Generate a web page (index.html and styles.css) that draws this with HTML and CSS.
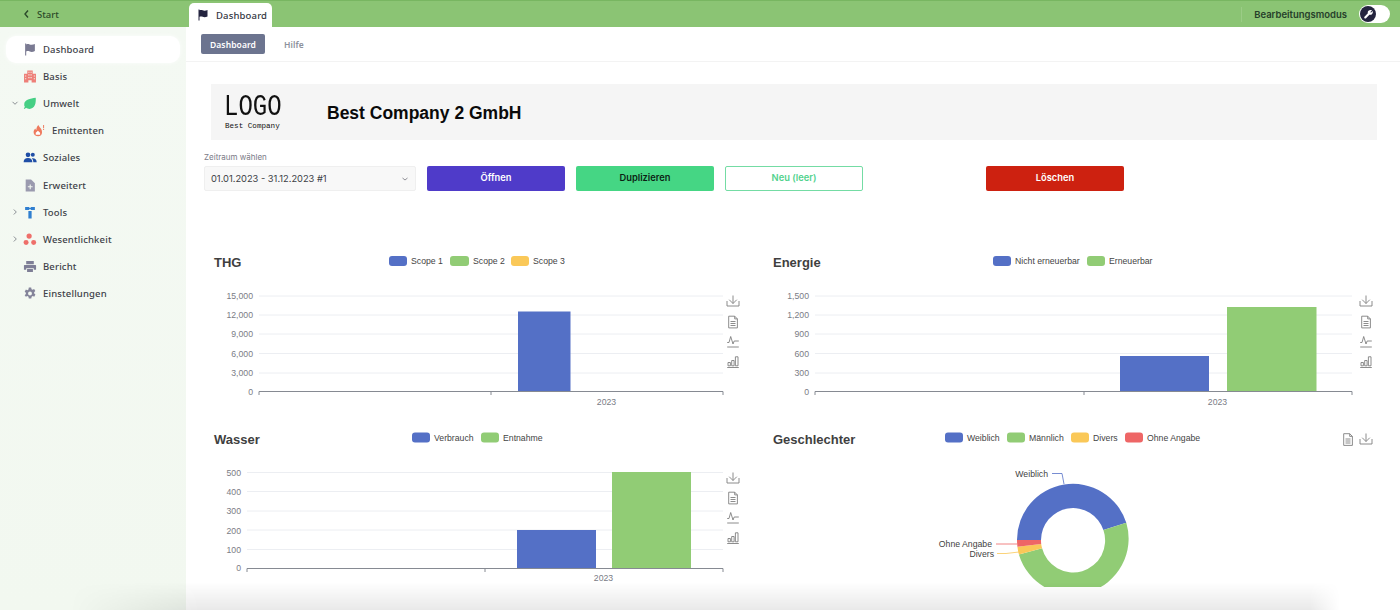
FILE: index.html
```html
<!DOCTYPE html>
<html lang="de">
<head>
<meta charset="utf-8">
<title>Dashboard</title>
<link rel="stylesheet" href="styles.css">
</head>
<body>
<svg class="defs" width="0" height="0" aria-hidden="true">
  <defs>
    <g id="t-save" class="tool"><path d="M-6 -1v5h12v-5M0 -6.500v8M-3.800 -2.300 0 1.500l3.800-3.800"/></g>
    <g id="t-doc" class="tool"><path d="M-4.300 -5.800h6l2.700 2.700v9h-8.700zM1.700 -5.800v2.700h2.700M-2.500 -0.500h5M-2.500 1.500h5M-2.500 3.500h5"/></g>
    <g id="t-line" class="tool"><path d="M-5.800 0.500h1.800l1.700-6 2.300 7.500 1.200-3h4.600M-5.800 5h11.600"/></g>
    <g id="t-bar" class="tool"><path d="M-5.800 5.500h11.600M-5 3.800v-3.300h2.400v3.300zM-1.300 3.800v-5.300h2.400v5.300zM2.400 3.800v-9h2.600v9z"/></g>
  </defs>
</svg>
<header class="topbar">
  <a class="topbar__back"><svg class="topbar__chev" viewBox="0 0 8 10"><path d="M5.500 1.500 2.500 5l3 3.500"/></svg>Start</a>
  <div class="tab">
    <svg class="tab__icon" viewBox="0 0 12 12"><path d="M1.500 0.500h1v11h-1zM2.500 1.300c2-.9 3.500.5 5 .4 1 0 2-.3 3-.7v6.400c-1 .5-2 .8-3 .8-1.600 0-3-1.300-5-.4z"/></svg>
    Dashboard
  </div>
  <div class="topbar__right">
    <span class="topbar__divider"></span>
    <span class="topbar__mode">Bearbeitungsmodus</span>
    <span class="toggle"><span class="toggle__knob"><svg viewBox="0 0 12 12"><path d="M9.800 1.500 8 3.300 8.700 4.100l1.800-1.800c.5 1.300.2 2.600-.8 3.400-.8.700-1.800.8-2.700.5L3.300 10c-.5.500-1.200.5-1.700 0s-.4-1.100 0-1.600L5.300 4.700c-.3-1-.1-2 .7-2.700.9-.9 2.500-1.100 3.800-.5z"/></svg></span></span>
  </div>
</header>
<div class="shell">
  <nav class="sidebar">
    <a class="nav-item nav-item--active">
      <svg class="nav-item__icon" viewBox="0 0 12 12"><path fill="#7a7a92" d="M1.500 0.500h1v11h-1zM2.500 1.300c2-.9 3.500.5 5 .4 1 0 2-.3 3-.7v6.400c-1 .5-2 .8-3 .8-1.600 0-3-1.300-5-.4z"/></svg>
      <span>Dashboard</span>
    </a>
    <a class="nav-item">
      <svg class="nav-item__icon" viewBox="0 0 12 12"><path fill="#ee7f78" d="M3.500 0.500h5v3h3v8h-4v-2h-3v2h-4v-8h3zM4.500 1.500v1h1v-1zM6.500 1.500v1h1v-1zM4.500 4v1h1V4zM6.500 4v1h1V4zM1.500 5v1h1V5zM9.500 5v1h1V5zM4.500 6.500v1h1v-1zM6.500 6.500v1h1v-1zM1.500 7.500v1h1v-1zM9.500 7.500v1h1v-1z"/></svg>
      <span>Basis</span>
    </a>
    <a class="nav-item">
      <svg class="nav-item__chev" viewBox="0 0 8 8"><path d="M1.500 2.800 4 5.300l2.500-2.500"/></svg>
      <svg class="nav-item__icon" viewBox="0 0 12 12"><path fill="#45cf84" d="M11.300.8c.4 5-.8 10.200-5.800 10.200-1.300 0-2.300-.4-3.100-1L1 11 .3 10.300l1-1C.7 8.400.5 7.300.7 6.200 1.300 2.500 6 1.700 11.300.8z"/></svg>
      <span>Umwelt</span>
    </a>
    <a class="nav-item nav-item--child">
      <svg class="nav-item__icon" viewBox="0 0 12 12"><path fill="#ee7a5e" d="M5.500 1C6 3 8.800 4.200 8.800 7.500c0 2.300-1.500 3.800-3.600 3.800S1 9.800 1 7.500c0-1.500.8-2.600 1.600-3.400.2.700.5 1.200 1 1.500C3.500 3.800 4.200 2.100 5.500 1z"/><path fill="#fff" d="M5 6.200 7 8v2H3V8z"/><path fill="#ee7a5e" d="M9.800 1h.9v3h-.9zM9.800 4.600h.9v1h-.9z"/></svg>
      <span>Emittenten</span>
    </a>
    <a class="nav-item">
      <svg class="nav-item__icon" viewBox="0 0 14 12"><path fill="#1f4ea6" d="M5 1a2.300 2.300 0 1 1 0 4.700A2.300 2.300 0 0 1 5 1zM9.800 1.300a2 2 0 1 1 0 4 2 2 0 0 1 0-4zM.6 10.800c0-2.800 1.700-4.300 4.400-4.300s4.400 1.500 4.400 4.300zM10.300 10.800c0-1.600-.5-3-1.600-4 2.800-.5 5 .9 5 4z"/></svg>
      <span>Soziales</span>
    </a>
    <a class="nav-item">
      <svg class="nav-item__icon" viewBox="0 0 12 12"><path fill="#9a9aae" d="M2 0.500h5l3.500 3.500v7.500H2z"/><path fill="#f3f8f1" d="M5.700 5h1v1.700h1.700v1H6.700v1.700h-1V7.700H4v-1h1.700z"/></svg>
      <span>Erweitert</span>
    </a>
    <a class="nav-item">
      <svg class="nav-item__chev" viewBox="0 0 8 8"><path d="M2.800 1.500 5.300 4 2.800 6.500"/></svg>
      <svg class="nav-item__icon" viewBox="0 0 12 12"><path fill="#2f7fd0" d="M1.500 1h3.700v2.700H1.500zM6.800 1h3.700v2.700H6.800zM5 1.600h2v1.500H5zM4.500 4.600h3v7h-3z"/></svg>
      <span>Tools</span>
    </a>
    <a class="nav-item">
      <svg class="nav-item__chev" viewBox="0 0 8 8"><path d="M2.800 1.500 5.300 4 2.800 6.500"/></svg>
      <svg class="nav-item__icon" viewBox="0 0 12 12"><g fill="#ee6f6a"><circle cx="5.200" cy="2.800" r="2.400"/><circle cx="2.400" cy="8.800" r="2.300"/><circle cx="9.400" cy="8.800" r="2.300"/></g></svg>
      <span>Wesentlichkeit</span>
    </a>
    <a class="nav-item">
      <svg class="nav-item__icon" viewBox="0 0 12 12"><path fill="#7e7e96" d="M2.500 1h7v3h-7zM1 4.500h10a.6.6 0 0 1 .6.600V9H9.500V7.500h-7V9H.4V5.100A.6.600 0 0 1 1 4.500zM3.300 8.300h5.400V11H3.300z"/></svg>
      <span>Bericht</span>
    </a>
    <a class="nav-item">
      <svg class="nav-item__icon" viewBox="0 0 12 12"><path fill="#84849a" fill-rule="evenodd" d="M4.900.5h2.200l.3 1.500 1 .5 1.400-.6 1.100 1.900-1.100 1 .1 1.200 1.100 1-1.100 1.900-1.400-.6-1 .6-.3 1.600H4.900l-.3-1.600-1-.6-1.400.6L1.100 7.500l1.100-1V5.300l-1.100-1 1.100-1.900 1.400.6 1-.6zM6 4.200a1.800 1.800 0 1 0 0 3.600 1.800 1.800 0 0 0 0-3.600z"/></svg>
      <span>Einstellungen</span>
    </a>
  </nav>
  <main class="main">
    <div class="subnav">
      <a class="subnav__item subnav__item--active">Dashboard</a>
      <a class="subnav__item">Hilfe</a>
    </div>
    <div class="content">
      <section class="company">
        <div class="logo">
          <span class="logo__mark">LOGO</span>
          <span class="logo__sub">Best Company</span>
        </div>
        <h1 class="company__name">Best Company 2 GmbH</h1>
      </section>
      <section class="period">
        <div class="field">
          <label class="field__label">Zeitraum wählen</label>
          <div class="field__select">
            <span>01.01.2023 - 31.12.2023 #1</span>
            <svg class="field__chev" viewBox="0 0 8 8"><path d="M1.500 3 4 5l2.500-2"/></svg>
          </div>
        </div>
        <button class="btn btn--open">Öffnen</button>
        <button class="btn btn--dup">Duplizieren</button>
        <button class="btn btn--new">Neu (leer)</button>
        <button class="btn btn--del">Löschen</button>
      </section>
      <section class="charts">
        <svg class="chart chart--top" viewBox="204 245 558 177">
          <text class="c-title" x="214" y="267">THG</text>
          <rect class="s-blue" x="389" y="256" width="18" height="10" rx="3"/><text class="c-leg" x="411" y="264">Scope 1</text>
          <rect class="s-green" x="450" y="256" width="19" height="10" rx="3"/><text class="c-leg" x="473" y="264">Scope 2</text>
          <rect class="s-yellow" x="511" y="256" width="18" height="10" rx="3"/><text class="c-leg" x="533" y="264">Scope 3</text>
          <path class="c-grid" d="M259 296H723M259 315H723M259 334H723M259 353.500H723M259 373H723"/>
          <text class="c-tick c-tick--y" x="253" y="299">15,000</text>
          <text class="c-tick c-tick--y" x="253" y="318">12,000</text>
          <text class="c-tick c-tick--y" x="253" y="337">9,000</text>
          <text class="c-tick c-tick--y" x="253" y="357">6,000</text>
          <text class="c-tick c-tick--y" x="253" y="376">3,000</text>
          <text class="c-tick c-tick--y" x="253" y="395">0</text>
          <rect class="s-blue" x="518" y="311.500" width="52.500" height="80"/>
          <path class="c-axis" d="M259 395V391.500H723V395M491 391.500V395"/>
          <text class="c-tick c-tick--x" x="606.500" y="405">2023</text>
          <use href="#t-save" x="733" y="302"/><use href="#t-doc" x="733" y="322"/><use href="#t-line" x="733" y="342"/><use href="#t-bar" x="733" y="362"/>
        </svg>
        <svg class="chart chart--top" viewBox="762 245 624 177">
          <text class="c-title" x="773" y="267">Energie</text>
          <rect class="s-blue" x="993" y="256" width="18" height="10" rx="3"/><text class="c-leg" x="1015" y="264">Nicht erneuerbar</text>
          <rect class="s-green" x="1087" y="256" width="18" height="10" rx="3"/><text class="c-leg" x="1109" y="264">Erneuerbar</text>
          <path class="c-grid" d="M815 296H1352M815 315H1352M815 334H1352M815 353.500H1352M815 373H1352"/>
          <text class="c-tick c-tick--y" x="809" y="299">1,500</text>
          <text class="c-tick c-tick--y" x="809" y="318">1,200</text>
          <text class="c-tick c-tick--y" x="809" y="337">900</text>
          <text class="c-tick c-tick--y" x="809" y="357">600</text>
          <text class="c-tick c-tick--y" x="809" y="376">300</text>
          <text class="c-tick c-tick--y" x="809" y="395">0</text>
          <rect class="s-blue" x="1120" y="356" width="89" height="35.500"/>
          <rect class="s-green" x="1227" y="307" width="89.500" height="84.500"/>
          <path class="c-axis" d="M815 395V391.500H1352V395M1084 391.500V395"/>
          <text class="c-tick c-tick--x" x="1217.500" y="405">2023</text>
          <use href="#t-save" x="1366" y="302"/><use href="#t-doc" x="1366" y="322"/><use href="#t-line" x="1366" y="342"/><use href="#t-bar" x="1366" y="362"/>
        </svg>
        <svg class="chart chart--bottom" viewBox="204 422 558 165">
          <text class="c-title" x="214" y="443.500">Wasser</text>
          <rect class="s-blue" x="412" y="432.500" width="18" height="10" rx="3"/><text class="c-leg" x="434" y="440.500">Verbrauch</text>
          <rect class="s-green" x="481" y="432.500" width="18" height="10" rx="3"/><text class="c-leg" x="503" y="440.500">Entnahme</text>
          <path class="c-grid" d="M247 472.500H723M247 491.500H723M247 511H723M247 530H723M247 549.500H723"/>
          <text class="c-tick c-tick--y" x="241" y="476">500</text>
          <text class="c-tick c-tick--y" x="241" y="495">400</text>
          <text class="c-tick c-tick--y" x="241" y="514">300</text>
          <text class="c-tick c-tick--y" x="241" y="534">200</text>
          <text class="c-tick c-tick--y" x="241" y="553">100</text>
          <text class="c-tick c-tick--y" x="241" y="571">0</text>
          <rect class="s-blue" x="517" y="530" width="79" height="38.500"/>
          <rect class="s-green" x="612" y="472" width="79" height="96.500"/>
          <path class="c-axis" d="M247 572V568.500H723V572M485 568.500V572"/>
          <text class="c-tick c-tick--x" x="603.500" y="581">2023</text>
          <use href="#t-save" x="733" y="479"/><use href="#t-doc" x="733" y="498"/><use href="#t-line" x="733" y="518"/><use href="#t-bar" x="733" y="538"/>
        </svg>
        <svg class="chart chart--bottom" viewBox="762 422 624 165">
          <text class="c-title" x="773" y="443.500">Geschlechter</text>
          <rect class="s-blue" x="945" y="432.500" width="18" height="10" rx="3"/><text class="c-leg" x="967" y="440.500">Weiblich</text>
          <rect class="s-green" x="1007" y="432.500" width="18" height="10" rx="3"/><text class="c-leg" x="1029" y="440.500">Männlich</text>
          <rect class="s-yellow" x="1071" y="432.500" width="18" height="10" rx="3"/><text class="c-leg" x="1093" y="440.500">Divers</text>
          <rect class="s-red" x="1125" y="432.500" width="18" height="10" rx="3"/><text class="c-leg" x="1147" y="440.500">Ohne Angabe</text>
          <use href="#t-doc" x="1348" y="439.500"/><use href="#t-save" x="1366" y="440"/>
          <path class="s-blue" d="M1017 540A56 56 0 0 1 1126.300 522.700L1103.400 530.100A32 32 0 0 0 1041 540Z"/>
          <path class="s-green" d="M1126.300 522.700A56 56 0 1 1 1018.900 554.500L1042.100 548.300A32 32 0 1 0 1103.400 530.100Z"/>
          <path class="s-yellow" d="M1018.900 554.500A56 56 0 0 1 1017.400 546.800L1041.200 543.900A32 32 0 0 0 1042.100 548.300Z"/>
          <path class="s-red" d="M1017.400 546.800A56 56 0 0 1 1017 540L1041 540A32 32 0 0 0 1041.200 543.900Z"/>
          <path class="c-lead c-lead--blue" d="M1052 473.500H1062L1064 484"/>
          <path class="c-lead c-lead--red" d="M996 544H1017"/>
          <path class="c-lead c-lead--yellow" d="M997 553.500H1006L1019 552"/>
          <text class="c-label" x="1048" y="477">Weiblich</text>
          <text class="c-label" x="992" y="547">Ohne Angabe</text>
          <text class="c-label" x="994" y="557">Divers</text>
        </svg>
      </section>
    </div>
  </main>
</div>
<div class="bottom-shade"></div>
</body>
</html>
```
FILE: styles.css
```css
* { box-sizing: border-box; }
html, body { margin: 0; height: 610px; overflow: hidden; }
body {
  position: relative;
  width: 1400px;
  background: #fff;
  font-family: "Noto Sans", sans-serif;
  color: #33363f;
}
.defs { position: absolute; }

.topbar {
  display: flex;
  align-items: flex-end;
  height: 27px;
  background: #8bc474;
  border-top: 1px solid #78b661;
  padding-left: 22px;
}
.topbar__back {
  display: flex;
  align-items: center;
  gap: 6px;
  width: 167px;
  height: 26px;
  font-size: 9.5px;
  font-weight: 500;
  color: #2b4a2a;
}
.topbar__chev { width: 9px; height: 10px; fill: none; stroke: #2b4a2a; stroke-width: 1.4; }
.tab {
  display: flex;
  align-items: center;
  gap: 7px;
  width: 83px;
  height: 24px;
  padding-left: 8px;
  background: #fff;
  border-radius: 5px 5px 0 0;
  font-size: 9.5px;
  font-weight: 500;
  letter-spacing: .15px;
  color: #33363f;
}
.tab__icon { width: 12px; height: 12px; fill: #23233f; }
.topbar__right {
  display: flex;
  align-items: center;
  height: 26px;
  margin-left: auto;
  padding-right: 10px;
}
.topbar__divider { width: 1px; height: 15px; background: #9bcc86; margin-right: 12px; }
.topbar__mode {
  font-family: Inter, sans-serif;
  font-size: 9.5px;
  font-weight: 600;
  color: #26402a;
  margin-right: 12px;
}
.toggle {
  display: flex;
  align-items: center;
  width: 31px;
  height: 18px;
  padding-left: 1px;
  background: #fff;
  border-radius: 9px;
}
.toggle__knob {
  display: flex;
  align-items: center;
  justify-content: center;
  width: 16px;
  height: 16px;
  border-radius: 50%;
  background: #24243e;
}
.toggle__knob svg { width: 11px; height: 11px; fill: #fff; }

.shell { display: flex; height: 583px; }
.sidebar {
  flex: 0 0 186px;
  padding: 8.6px 6px 0;
  background: linear-gradient(180deg, #f4f9f3 0%, #f2f8f0 100%);
}
.nav-item {
  position: relative;
  display: flex;
  align-items: center;
  gap: 6px;
  height: 27.2px;
  padding-left: 17px;
  font-size: 9.5px;
  font-weight: 500;
  letter-spacing: .15px;
  color: #3d4148;
}
.nav-item--active { background: #fff; border-radius: 10px; box-shadow: 0 0 4px rgba(255,255,255,.8); }
.nav-item--child { padding-left: 26px; }
.nav-item__icon { flex: none; width: 14px; height: 13px; }
.nav-item__chev {
  position: absolute;
  left: 5px;
  top: 9.5px;
  width: 8px;
  height: 8px;
  fill: none;
  stroke: #8a8f94;
  stroke-width: 1;
}

.main { flex: 1; min-width: 0; }
.subnav {
  display: flex;
  align-items: center;
  gap: 6px;
  height: 35px;
  padding-left: 15px;
  border-bottom: 1px solid #f3f3f3;
}
.subnav__item {
  display: flex;
  align-items: center;
  justify-content: center;
  width: 64px;
  height: 20px;
  border-radius: 2px;
  font-size: 8.5px;
  font-weight: 600;
  letter-spacing: .1px;
  color: #8d919c;
}
.subnav__item--active { background: #6c748f; color: #fff; }
.subnav__item:last-child { width: 46px; }

.content { padding: 22px 23px 0 18px; }
.company {
  display: flex;
  align-items: center;
  height: 56px;
  margin-left: 7px;
  padding-left: 13px;
  background: #f5f5f5;
}
.logo {
  display: flex;
  flex-direction: column;
  width: 103px;
  padding-top: 4px;
  color: #111;
  font-family: "Liberation Mono", monospace;
}
.logo__mark { font-size: 24px; line-height: 17px; transform: scaleY(1.22); }
.logo__sub { font-size: 7.6px; line-height: 8px; margin-top: 6px; padding-left: 1px; }
.company__name {
  margin: 2px 0 0;
  font-family: "Liberation Sans", sans-serif;
  font-size: 17.5px;
  font-weight: 700;
  color: #0a0a0a;
}

.period { display: flex; align-items: flex-end; gap: 11px; margin-top: 13px; font-family: Inter, sans-serif; }
.field { width: 212px; }
.field__label { display: block; font-size: 8px; line-height: 8px; margin-bottom: 5px; color: #7a7a86; }
.field__select {
  display: flex;
  align-items: center;
  justify-content: space-between;
  height: 25px;
  padding: 0 6px;
  background: #f8f8f8;
  border: 1px solid #efefef;
  border-radius: 2px;
  font-size: 9.3px;
  color: #3d3f46;
}
.field__chev { width: 8px; height: 8px; fill: none; stroke: #8f8f96; stroke-width: 1; }
.btn {
  width: 138px;
  height: 25px;
  padding: 0 0 2px;
  border: 1px solid transparent;
  border-radius: 2px;
  font-family: Inter, sans-serif;
  font-size: 9.3px;
  font-weight: 600;
}
.btn--open { background: #4f3bc9; color: #fff; }
.btn--dup { background: #45d684; color: #0c1f14; }
.btn--new { background: #fff; border-color: #74dca4; color: #52d28e; }
.btn--del { background: #cd2110; color: #fff; margin-left: 112px; }

.charts { display: grid; grid-template-columns: 558px 624px; margin-top: 54px; }
.chart { display: block; font-family: "Liberation Sans", sans-serif; }
.chart--top { height: 177px; width: 100%; }
.chart--bottom { height: 165px; width: 100%; }
.c-title { font-size: 13px; font-weight: 700; fill: #3f3f3f; }
.c-leg { font-size: 8.7px; fill: #444; }
.c-tick { font-size: 8.7px; fill: #7a7c85; }
.c-tick--y { text-anchor: end; }
.c-tick--x { text-anchor: middle; }
.c-label { font-size: 8.7px; fill: #3f3f3f; text-anchor: end; }
.c-grid { fill: none; stroke: #eceef2; stroke-width: 1; }
.c-axis { fill: none; stroke: #868a92; stroke-width: 1; }
.s-blue { fill: #5470c6; }
.s-green { fill: #91cc75; }
.s-yellow { fill: #fac858; }
.s-red { fill: #ee6666; }
.c-lead { fill: none; stroke-width: .8; }
.c-lead--blue { stroke: #5470c6; }
.c-lead--red { stroke: #ee6666; }
.c-lead--yellow { stroke: #fac858; }
.tool { fill: none; stroke: #808080; stroke-width: .9; }

.bottom-shade {
  position: absolute;
  left: 70px;
  right: 60px;
  bottom: 0;
  height: 28px;
  background: linear-gradient(180deg, rgba(0,0,0,0) 0%, rgba(0,0,0,.085) 100%);
  -webkit-mask-image: linear-gradient(90deg, transparent 0, #000 130px, #000 1240px, transparent 100%);
  mask-image: linear-gradient(90deg, transparent 0, #000 130px, #000 1240px, transparent 100%);
  pointer-events: none;
}
```
